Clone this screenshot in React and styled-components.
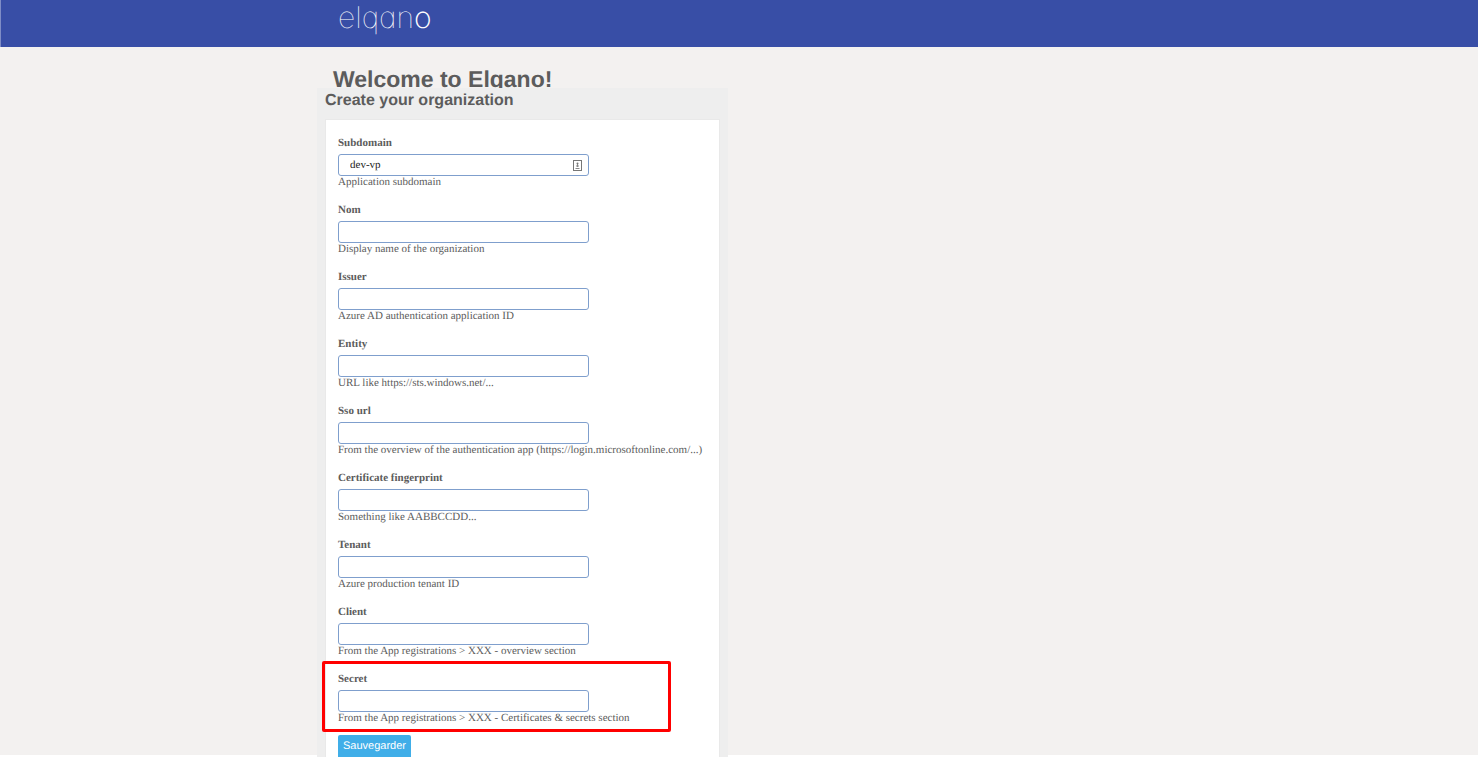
import React from "react";
import styled, { createGlobalStyle } from "styled-components";

const colorPalette = {
  banner: "#384ea6",
  background: "#f3f1f0",
  panel: "#eeeeee",
  white: "#ffffff",
  text: "#5c5c5c",
  inputText: "#222222",
  inputBorder: "#7f9fcd",
  button: "#40aee8",
  highlight: "#ff0000",
};

const sans = `"Liberation Sans", Arial, sans-serif`;
const serif = `"Liberation Serif", "Times New Roman", serif`;

const GlobalStyle = createGlobalStyle`
  * {
    box-sizing: border-box;
  }

  body {
    min-height: 100vh;
    margin: 0;
    background-color: ${colorPalette.white};
    color: ${colorPalette.text};
    font-family: ${serif};
    text-rendering: geometricPrecision;
  }
`;

const Container = styled.div`
  max-width: 844px;
  margin: 0 auto;
`;

const Banner = styled.header`
  height: 47px;
  background-color: ${colorPalette.banner};
  border-left: 1px solid #7f8dc6;
`;

const LogoLink = styled.a`
  display: inline-block;
  padding: 0 20px;
`;

const Logo = styled.svg`
  display: block;
  width: 108px;
  height: 44px;

  text {
    fill: ${colorPalette.white};
    font-family: Inter, Lato, sans-serif;
    font-size: 30px;
    font-weight: 100;
    font-feature-settings: "cv11";
  }

  tspan {
    font-weight: 200;
  }
`;

const Main = styled.main`
  background-color: ${colorPalette.background};
  padding-top: 17px;
`;

const Title = styled.h1`
  height: 24px;
  margin: 0;
  padding-left: 16px;
  font-family: ${sans};
  font-size: 23px;
  line-height: 30px;
`;

/* covers the foot of the title */
const Panel = styled.section`
  position: relative;
  max-width: 411px;
  padding: 0 8px;
  background-color: ${colorPalette.panel};
`;

const PanelTitle = styled.h2`
  margin: 0;
  padding-bottom: 5px;
  font-family: ${sans};
  font-size: 16px;
  line-height: 26px;
`;

const Card = styled.form`
  padding: 16px 12px 0;
  background-color: ${colorPalette.white};
  border: 1px solid #e9e9e9;
  border-bottom: none;
`;

const FieldList = styled.div`
  display: flex;
  flex-direction: column;
  gap: 15px;
  margin-bottom: 11px;
`;

const Field = styled.div`
  position: relative;
  display: flex;
  flex-direction: column;
  align-items: flex-start;

  &::after {
    content: "";
    display: ${(props) => (props.$highlighted ? "block" : "none")};
    position: absolute;
    inset: -11px 36px -8px -16px;
    border: 3px solid ${colorPalette.highlight};
    border-radius: 2px;
    pointer-events: none;
  }
`;

const Label = styled.label`
  font-size: 11px;
  font-weight: bold;
  line-height: 14px;
  margin-bottom: 4px;
`;

const InputWrapper = styled.div`
  position: relative;
  width: 100%;
  max-width: 251px;

  svg {
    position: absolute;
    top: 6px;
    right: 7px;
  }
`;

const Input = styled.input`
  display: block;
  width: 100%;
  height: 22px;
  padding: 0 11px;
  border: 1px solid ${colorPalette.inputBorder};
  border-radius: 3px;
  background-color: ${colorPalette.white};
  color: ${colorPalette.inputText};
  font-family: ${serif};
  font-size: 11px;
  text-rendering: inherit;
  outline: none;
`;

const Hint = styled.span`
  font-size: 11px;
  line-height: 12px;
`;

const SaveButton = styled.button`
  display: block;
  height: 22px;
  padding: 0 5px;
  border: none;
  border-radius: 2px 2px 0 0;
  background-color: ${colorPalette.button};
  color: ${colorPalette.white};
  font-family: ${sans};
  font-size: 11px;
  text-rendering: inherit;
  cursor: pointer;
`;

/* the grey area stops just short of the panel's foot */
const Page = styled.div`
  background-color: ${colorPalette.white};

  ${Main} {
    background-image: linear-gradient(
      ${colorPalette.white},
      ${colorPalette.white}
    );
    background-position: bottom;
    background-repeat: no-repeat;
    background-size: 100% 2px;
  }
`;

const fields = [
  {
    name: "subdomain",
    label: "Subdomain",
    hint: "Application subdomain",
    value: "dev-vp",
    icon: true,
  },
  { name: "nom", label: "Nom", hint: "Display name of the organization" },
  {
    name: "issuer",
    label: "Issuer",
    hint: "Azure AD authentication application ID",
  },
  {
    name: "entity",
    label: "Entity",
    hint: "URL like https://sts.windows.net/...",
  },
  {
    name: "sso_url",
    label: "Sso url",
    hint: "From the overview of the authentication app (https://login.microsoftonline.com/...)",
  },
  {
    name: "fingerprint",
    label: "Certificate fingerprint",
    hint: "Something like AABBCCDD...",
  },
  { name: "tenant", label: "Tenant", hint: "Azure production tenant ID" },
  {
    name: "client",
    label: "Client",
    hint: "From the App registrations > XXX - overview section",
  },
  {
    name: "secret",
    label: "Secret",
    hint: "From the App registrations > XXX - Certificates & secrets section",
    highlighted: true,
  },
];

const AutofillIcon = () => (
  <svg width="9" height="11" viewBox="0 0 9 11" fill="none" aria-hidden="true">
    <rect x="0.5" y="0.5" width="8" height="10" stroke="#777" />
    <circle cx="4.5" cy="3.5" r="1" fill="#777" />
    <path d="M4.5 4v3M3 6h3M2.5 8.5h4" stroke="#888" />
  </svg>
);

const App = () => {
  return (
    <Page>
      <GlobalStyle />
      <Banner>
        <Container>
          <LogoLink href="/" aria-label="elqano">
            <Logo viewBox="0 0 108 44">
              <text x="0" y="28">
                elqan<tspan>o</tspan>
              </text>
            </Logo>
          </LogoLink>
        </Container>
      </Banner>
      <Main>
        <Container>
          <Title>Welcome to Elqano!</Title>
          <Panel>
            <PanelTitle>Create your organization</PanelTitle>
            <Card onSubmit={(e) => e.preventDefault()}>
              <FieldList>
                {fields.map((field) => (
                  <Field key={field.name} $highlighted={field.highlighted}>
                    <Label htmlFor={field.name}>{field.label}</Label>
                    <InputWrapper>
                      <Input
                        id={field.name}
                        name={field.name}
                        type="text"
                        defaultValue={field.value}
                        aria-describedby={`${field.name}-hint`}
                      />
                      {field.icon && <AutofillIcon />}
                    </InputWrapper>
                    <Hint id={`${field.name}-hint`}>{field.hint}</Hint>
                  </Field>
                ))}
              </FieldList>
              <SaveButton type="submit">Sauvegarder</SaveButton>
            </Card>
          </Panel>
        </Container>
      </Main>
    </Page>
  );
};

export default App;
